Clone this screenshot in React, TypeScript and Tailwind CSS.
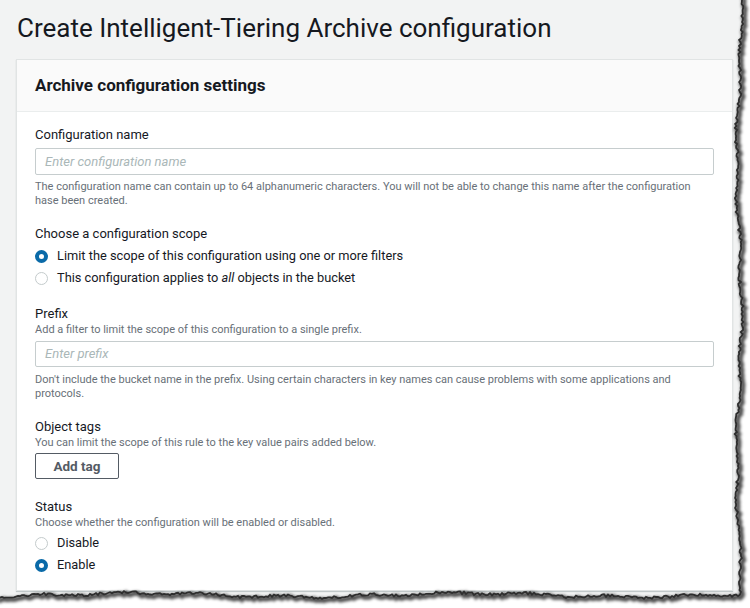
import React from "react";

function rnd(i: number) {
  const x = Math.sin(i * 12.9898 + 78.233) * 43758.5453;
  return x - Math.floor(x);
}

function TornEdge() {
  const right: [number, number][] = [];
  for (let y = -4, i = 0; y <= 592; y += 2, i++) {
    const n =
      2.4 * Math.sin(y * 0.021 + 1.3) +
      1.3 * Math.sin(y * 0.083 + 0.4) +
      (rnd(i) - 0.5) * 2.6;
    right.push([739 + n, y]);
  }
  const bottom: [number, number][] = [];
  for (let x = 740, j = 0; x >= -4; x -= 2, j++) {
    const n =
      1.8 * Math.sin(x * 0.019 + 2.1) +
      1.1 * Math.sin(x * 0.077 + 1.7) +
      (rnd(j + 500) - 0.5) * 2.6;
    bottom.push([x, 595 + n]);
  }
  const pts = [...right, ...bottom];
  const edge = pts.map((p, k) => `${k === 0 ? "M" : "L"}${p[0].toFixed(1)} ${p[1].toFixed(1)}`).join(" ");
  const outside = `M760 -10 ${pts.map((p) => `L${p[0].toFixed(1)} ${p[1].toFixed(1)}`).join(" ")} L-10 620 L760 620 Z`;
  return (
    <svg className="absolute inset-0 pointer-events-none" width="750" height="608" viewBox="0 0 750 608">
      <defs>
        <filter id="blur1" x="-10%" y="-10%" width="120%" height="120%">
          <feGaussianBlur stdDeviation="1.5" />
        </filter>
        <filter id="blur0" x="-10%" y="-10%" width="120%" height="120%">
          <feGaussianBlur stdDeviation="0.4" />
        </filter>
      </defs>
      <path d={outside} fill="#ffffff" />
      <path d={edge} fill="none" stroke="#000" strokeOpacity="0.7" strokeWidth="4.5" filter="url(#blur1)" transform="translate(2 2)" />
      <path d={edge} fill="none" stroke="#2e2e2e" strokeWidth="1.8" filter="url(#blur0)" />
    </svg>
  );
}

function Radio({ checked, children }: { checked?: boolean; children: React.ReactNode }) {
  return (
    <div className="flex items-center h-[22px]">
      {checked ? (
        <span className="w-[13px] h-[13px] rounded-full border-[4px] border-[#0a6aa8] bg-white shrink-0" />
      ) : (
        <span className="w-[13px] h-[13px] rounded-full border border-[#c4cbcc] bg-white shrink-0" />
      )}
      <span className="ml-[9px] text-[12.8px] leading-[22px] text-[#16191f]">{children}</span>
    </div>
  );
}

export default function App() {
  return (
    <div
      className="relative w-[750px] h-[608px] overflow-hidden bg-[#f2f3f3]"
      style={{ fontFamily: "Roboto, 'Liberation Sans', Arial, sans-serif" }}
    >
      <div className="pt-[12px] pl-[17px] text-[26px] leading-[32px] text-[#16191f]">
        Create Intelligent-Tiering Archive configuration
      </div>
      <div className="mt-[15px] ml-[16px] w-[717px] bg-white border border-[#e1e4e4] shadow-[0_1px_1px_rgba(0,28,36,0.2)]">
        <div className="h-[52px] flex items-center px-[18px] bg-[#fafafa] border-b border-[#eaeded]">
          <span className="text-[17px] font-bold text-[#16191f]">Archive configuration settings</span>
        </div>
        <div className="px-[18px] pb-[14px]">
          <div className="pt-[14px] text-[13px] leading-[18px] text-[#16191f]">Configuration name</div>
          <div className="mt-[4px] h-[27px] border border-[#c6cdce] rounded-[2px] flex items-center px-[9px]">
            <span className="italic text-[13px] text-[#aab7b8]">Enter configuration name</span>
          </div>
          <div className="mt-[5px] text-[11px] leading-[14px] text-[#687078]">
            The configuration name can contain up to 64 alphanumeric characters. You will not be able to change this name after the configuration
            <br />
            hase been created.
          </div>
          <div className="mt-[17px] text-[13px] leading-[18px] text-[#16191f]">Choose a configuration scope</div>
          <div className="mt-[2px]">
            <Radio checked>Limit the scope of this configuration using one or more filters</Radio>
            <Radio>
              This configuration applies to <i>all</i> objects in the bucket
            </Radio>
          </div>
          <div className="mt-[16px] text-[13px] leading-[18px] text-[#16191f]">Prefix</div>
          <div className="text-[11px] leading-[14px] text-[#687078]">
            Add a filter to limit the scope of this configuration to a single prefix.
          </div>
          <div className="mt-[4px] h-[26px] border border-[#c6cdce] rounded-[2px] flex items-center px-[9px]">
            <span className="italic text-[13px] text-[#aab7b8]">Enter prefix</span>
          </div>
          <div className="mt-[6px] text-[11px] leading-[14px] text-[#687078]">
            Don't include the bucket name in the prefix. Using certain characters in key names can cause problems with some applications and
            <br />
            protocols.
          </div>
          <div className="mt-[17px] text-[13px] leading-[18px] text-[#16191f]">Object tags</div>
          <div className="text-[11px] leading-[14px] text-[#687078]">
            You can limit the scope of this rule to the key value pairs added below.
          </div>
          <div className="mt-[3px] w-[84px] h-[26px] border border-[#545b64] rounded-[2px] flex items-center justify-center">
            <span className="text-[13.5px] font-bold text-[#545b64]">Add tag</span>
          </div>
          <div className="mt-[19px] text-[13px] leading-[18px] text-[#16191f]">Status</div>
          <div className="text-[11px] leading-[14px] text-[#687078]">
            Choose whether the configuration will be enabled or disabled.
          </div>
          <div className="mt-[2px]">
            <Radio>Disable</Radio>
            <Radio checked>Enable</Radio>
          </div>
        </div>
      </div>
      <TornEdge />
    </div>
  );
}
